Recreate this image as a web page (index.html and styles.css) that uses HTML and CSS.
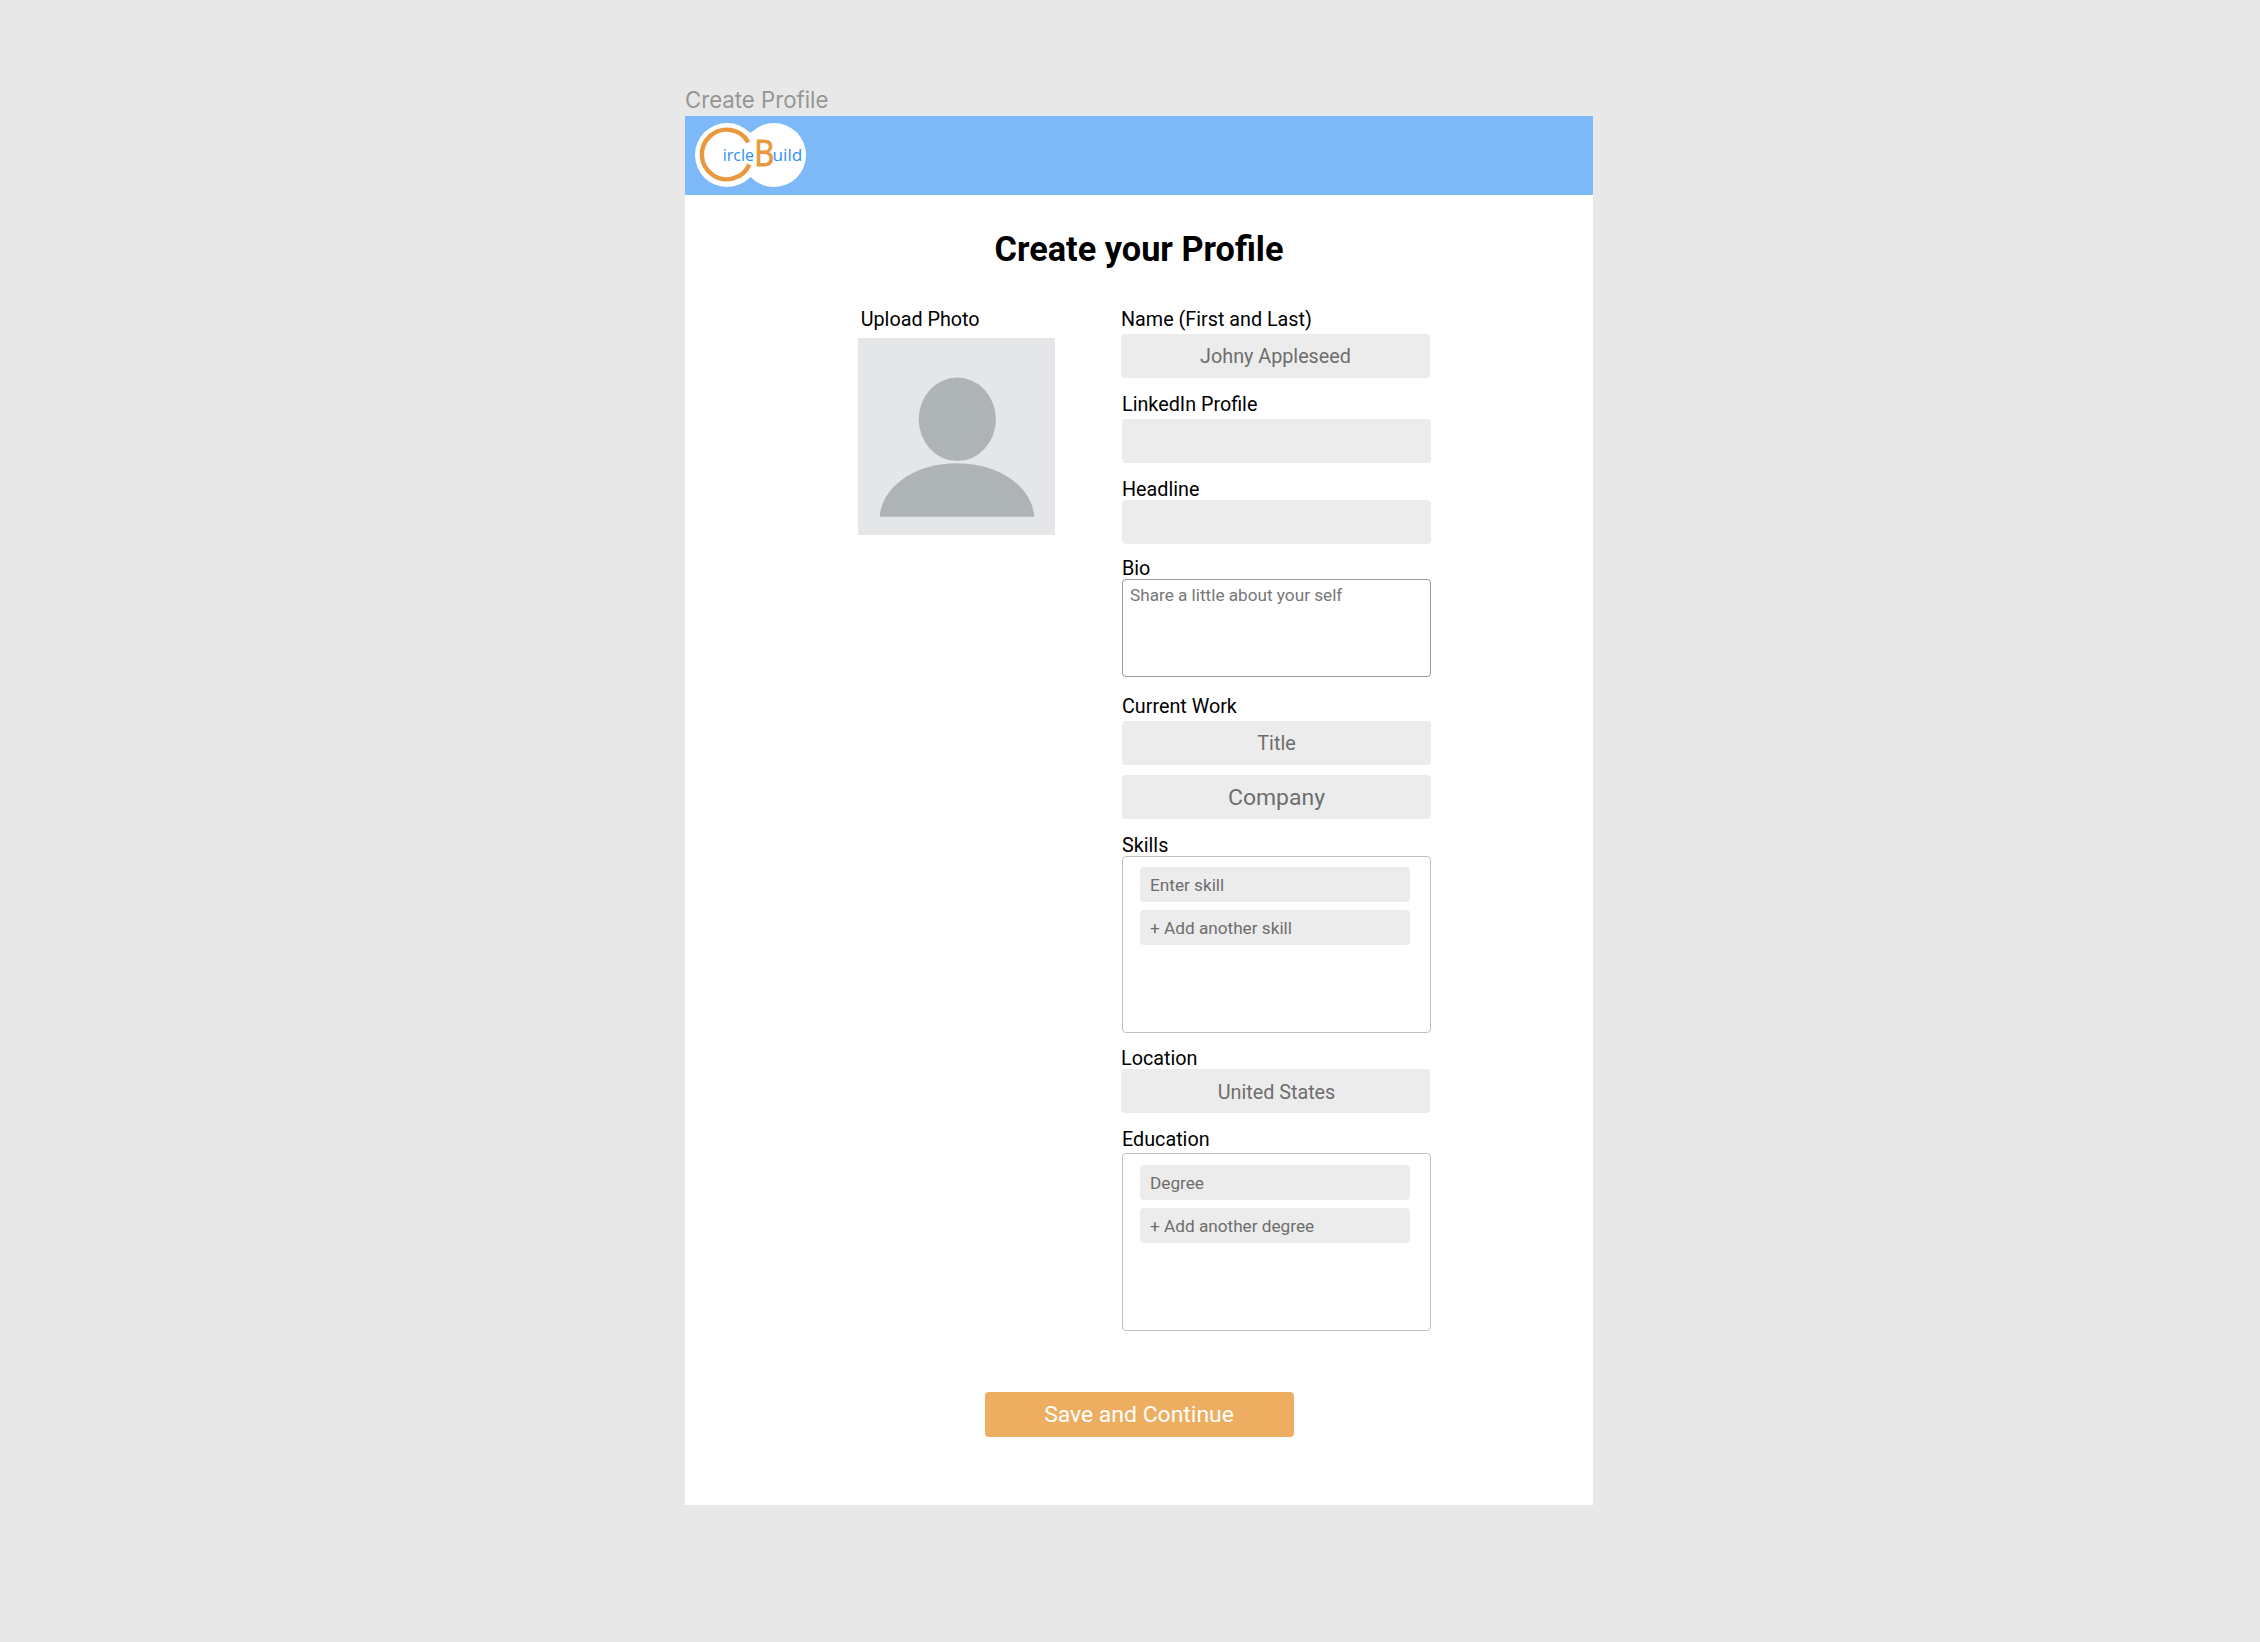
FILE: index.html
```html
<!DOCTYPE html>
<html lang="en">
<head>
<meta charset="utf-8">
<title>Create Profile</title>
<link rel="stylesheet" href="styles.css">
</head>
<body>
<div class="frame-name">Create Profile</div>
<div class="frame">
  <header class="header">
    <svg class="logo" width="112" height="64" viewBox="0 0 112 64">
      <circle cx="32" cy="32" r="32" fill="#fff"/>
      <circle cx="79" cy="32" r="32" fill="#fff"/>
      <path d="M53.300 19.300A24.8 24.8 0 1 0 54.400 41.5" fill="none" stroke="#ea983e" stroke-width="4.4"/>
      <text class="logo-word" x="27.800" y="37.600" font-size="16.2" textLength="31.2" lengthAdjust="spacingAndGlyphs">ircle</text>
      <text class="logo-initial" x="59.200" y="43.200" font-size="36" textLength="20" lengthAdjust="spacingAndGlyphs">B</text>
      <text class="logo-word" x="77.600" y="37.600" font-size="16.2" textLength="29.700" lengthAdjust="spacingAndGlyphs">uild</text>
    </svg>
  </header>
  <h1 class="title">Create your Profile</h1>
  <main class="columns">
    <section class="photo">
      <div class="label">Upload Photo</div>
      <svg class="avatar" width="197" height="197" viewBox="0 0 197 197">
        <rect width="197" height="197" fill="#e4e6e8"/>
        <ellipse cx="99.3" cy="81.3" rx="38.6" ry="41.8" fill="#aeb4b6"/>
        <path d="M21.7 178.8C24 148 57.500 125.300 99 125.300S174 148 176.200 178.800Z" fill="#aeb4b6"/>
      </svg>
    </section>
    <form class="form">
      <div class="field shifted gap-5">
        <div class="label">Name (First and Last)</div>
        <div class="input">Johny Appleseed</div>
      </div>
      <div class="field linkedin gap-5">
        <div class="label">LinkedIn Profile</div>
        <div class="input"></div>
      </div>
      <div class="field headline">
        <div class="label">Headline</div>
        <div class="input"></div>
      </div>
      <div class="field bio">
        <div class="label">Bio</div>
        <div class="textarea">Share a little about your self</div>
      </div>
      <div class="field work gap-5">
        <div class="label">Current Work</div>
        <div class="input-stack">
          <div class="input">Title</div>
          <div class="input large">Company</div>
        </div>
      </div>
      <div class="field skills">
        <div class="label">Skills</div>
        <div class="list">
          <div class="entry">Enter skill</div>
          <div class="entry">+ Add another skill</div>
        </div>
      </div>
      <div class="field shifted location">
        <div class="label">Location</div>
        <div class="input">United States</div>
      </div>
      <div class="field education">
        <div class="label">Education</div>
        <div class="list">
          <div class="entry">Degree</div>
          <div class="entry">+ Add another degree</div>
        </div>
      </div>
    </form>
  </main>
  <div class="save">Save and Continue</div>
</div>
</body>
</html>
```
FILE: styles.css
```css
* { box-sizing: border-box; }

body {
  margin: 0;
  height: 1642px;
  padding: 86px 0 0 685px;
  background: #e8e8e8;
  font-family: Roboto, sans-serif;
  color: #000;
  overflow: hidden;
}

.frame-name {
  height: 30px;
  font: 22.2px/28px Inter, sans-serif;
  color: #969696;
}

.frame {
  width: 908px;
  height: 1389px;
  background: #fff;
}

.header {
  height: 79px;
  padding: 7px 0 0 10px;
  background: #7db8f9;
}

.logo { display: block; }
.logo-word { font-family: "Open Sans", sans-serif; fill: #2f8ff0; }

.logo-initial {
  font-family: "Open Sans", sans-serif;
  fill: #ea983e;
  stroke: #ea983e;
  stroke-width: 0.9px;
}

.title {
  margin: 34px 0 0;
  height: 40px;
  font-size: 34.3px;
  line-height: 40px;
  font-weight: 700;
  text-align: center;
}

.columns {
  display: flex;
  margin-top: 40px;
  padding-left: 173px;
}

.photo { width: 264px; }
.photo .label { padding-left: 2.7px; }

.avatar {
  display: block;
  margin-top: 9px;
}

.label {
  height: 20px;
  font-size: 19.75px;
  line-height: 22px;
  white-space: nowrap;
}

.form { width: 309px; }

.field {
  display: flex;
  flex-direction: column;
  gap: 1px;
  margin-top: 16px;
}

.field.gap-5 { gap: 5px; }
.field:first-child { margin-top: 0; }
.field.shifted { margin-left: -1px; margin-right: 1px; }
.field.bio { margin-top: 14px; }
.field.work { margin-top: 19px; }
.field.location { margin-top: 15px; }
.field.education { gap: 4px; }

.input {
  height: 44px;
  border-radius: 4px;
  background: #ececec;
  color: #6e6e6e;
  font-size: 19.75px;
  line-height: 46px;
  text-align: center;
}

.location .input {
  padding-left: 2px;
  line-height: 48px;
}

.input.large { font-size: 22.95px; }

.input-stack {
  display: flex;
  flex-direction: column;
  gap: 10px;
}

.textarea {
  height: 98px;
  padding: 5px 7px;
  border: 1px solid #9c9c9c;
  border-radius: 4px;
  color: #777;
  font-size: 17.18px;
  line-height: 20px;
}

.list {
  display: flex;
  flex-direction: column;
  gap: 8px;
  height: 177px;
  padding: 10px 20px 0 17px;
  border: 1px solid #c0c0c0;
  border-radius: 4px;
}

.education .list {
  height: 178px;
  padding-top: 11px;
}

.entry {
  height: 35px;
  padding-left: 10px;
  border-radius: 4px;
  background: #ececec;
  color: #6e6e6e;
  font-size: 17.2px;
  line-height: 37px;
}

.save {
  width: 309px;
  height: 45px;
  margin: 61px auto 0;
  border-radius: 4px;
  background: #eeae62;
  color: #fff;
  font-size: 22.95px;
  line-height: 45px;
  text-align: center;
}
```
